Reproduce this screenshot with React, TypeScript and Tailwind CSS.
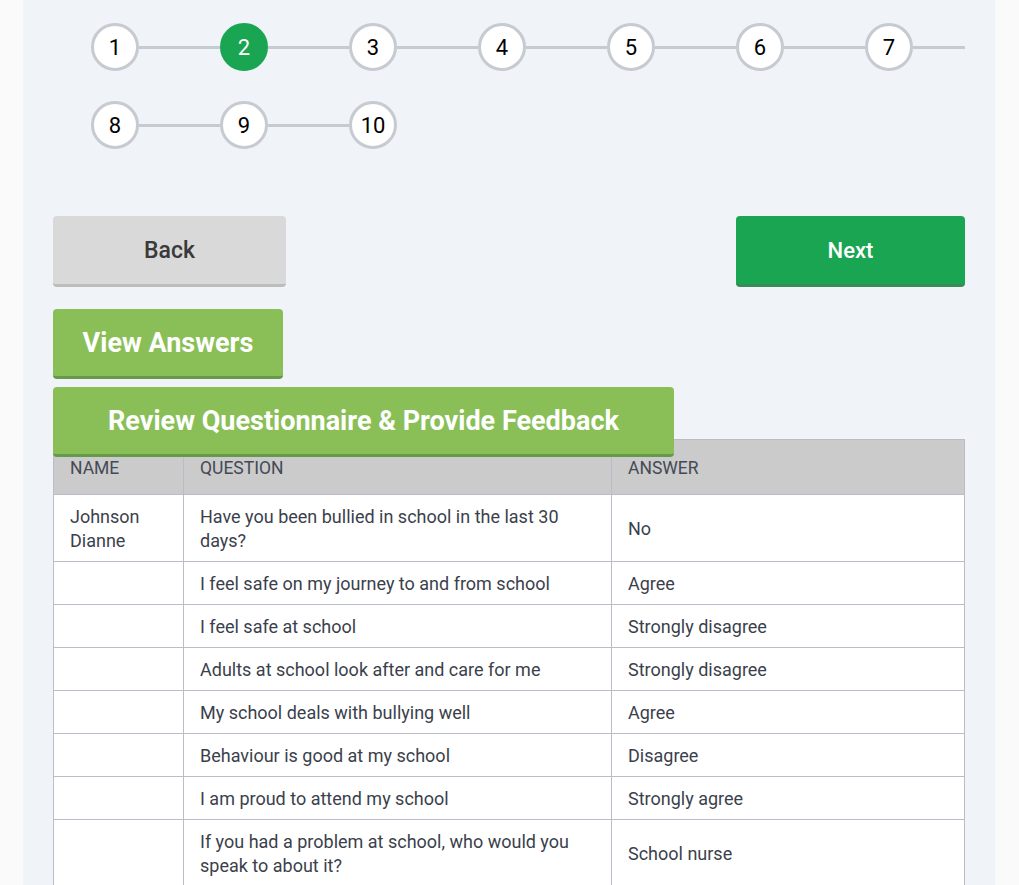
const rows: { name?: string; question: string; answer: string }[] = [
  { name: 'Johnson Dianne', question: 'Have you been bullied in school in the last 30 days?', answer: 'No' },
  { question: 'I feel safe on my journey to and from school', answer: 'Agree' },
  { question: 'I feel safe at school', answer: 'Strongly disagree' },
  { question: 'Adults at school look after and care for me', answer: 'Strongly disagree' },
  { question: 'My school deals with bullying well', answer: 'Agree' },
  { question: 'Behaviour is good at my school', answer: 'Disagree' },
  { question: 'I am proud to attend my school', answer: 'Strongly agree' },
  { question: 'If you had a problem at school, who would you speak to about it?', answer: 'School nurse' },
];

function Step({ n, active, line }: { n: number; active?: boolean; line?: boolean }) {
  return (
    <div className="flex items-center w-[129px] shrink-0">
      <div
        className={
          active
            ? 'w-12 h-12 shrink-0 rounded-full bg-[#19a552] border-[3px] border-[#19a552] text-white flex items-center justify-center text-[22px]'
            : 'w-12 h-12 shrink-0 rounded-full bg-white border-[3px] border-[#c6cad1] text-black flex items-center justify-center text-[22px]'
        }
      >
        {n}
      </div>
      {line && <div className="flex-1 h-[3px] bg-[#c6cad1]" />}
    </div>
  );
}

export default function App() {
  return (
    <div className="min-h-screen bg-[#fafafa] font-['Roboto',sans-serif]">
      <div className="ml-[23px] w-[972px] min-h-[885px] bg-[#f0f4f8] px-[30px] pt-[23px]">
        {/* steps */}
        <div className="ml-[38px] w-[874px] overflow-hidden flex flex-col gap-[30px]">
          <div className="flex">
            {[1, 2, 3, 4, 5, 6, 7].map((n) => (
              <Step key={n} n={n} active={n === 2} line />
            ))}
          </div>
          <div className="flex">
            <Step n={8} line />
            <Step n={9} line />
            <Step n={10} />
          </div>
        </div>

        <div className="mt-[67px] flex justify-between">
          <button className="w-[233px] h-[71px] pt-[3px] rounded-[4px] bg-[#d9d9d9] border-b-[3px] border-[#bcbcbc] text-[23px] font-medium text-[#3a3a3a]">
            Back
          </button>
          <button className="w-[229px] h-[71px] rounded-[4px] bg-[#19a552] border-b-[3px] border-[#3b8a5a] text-[22px] font-medium text-white">
            Next
          </button>
        </div>

        <button className="mt-[22px] block w-[230px] h-[70px] pt-[2px] rounded-[4px] bg-[#8abf57] border-b-[3px] border-[#659a4b] text-[27px] font-bold text-white">
          View Answers
        </button>
        <button className="relative z-10 mt-[8px] -mb-[18px] block w-[621px] h-[70px] pt-[2px] rounded-[4px] bg-[#8abf57] border-b-[3px] border-[#659a4b] text-[27px] font-bold text-white">
          Review Questionnaire &amp; Provide Feedback
        </button>

        <table className="w-[912px] border-collapse text-[18px] leading-6 text-[#3b3f4c] table-fixed">
          <colgroup>
            <col className="w-[130px]" />
            <col className="w-[428px]" />
            <col />
          </colgroup>
          <thead>
            <tr className="bg-[#cbcbcb] text-[17.5px] text-[#444a55] uppercase text-left">
              <th className="font-normal px-4 pt-[16px] pb-[14px] border border-[#b9bdc7] align-top">Name</th>
              <th className="font-normal px-4 pt-[16px] pb-[14px] border border-[#b9bdc7] align-top">Question</th>
              <th className="font-normal px-4 pt-[16px] pb-[14px] border border-[#b9bdc7] align-top">Answer</th>
            </tr>
          </thead>
          <tbody className="bg-white">
            {rows.map((r, i) => (
              <tr key={i}>
                <td className="px-4 pt-[10px] pb-[8px] border border-[#b9bdc7] align-middle">
                  {r.name && (
                    <>
                      Johnson
                      <br />
                      Dianne
                    </>
                  )}
                </td>
                <td className="px-4 pt-[10px] pb-[8px] border border-[#b9bdc7] align-middle">{r.question}</td>
                <td className="px-4 pt-[10px] pb-[8px] border border-[#b9bdc7] align-middle">{r.answer}</td>
              </tr>
            ))}
          </tbody>
        </table>
      </div>
    </div>
  );
}
